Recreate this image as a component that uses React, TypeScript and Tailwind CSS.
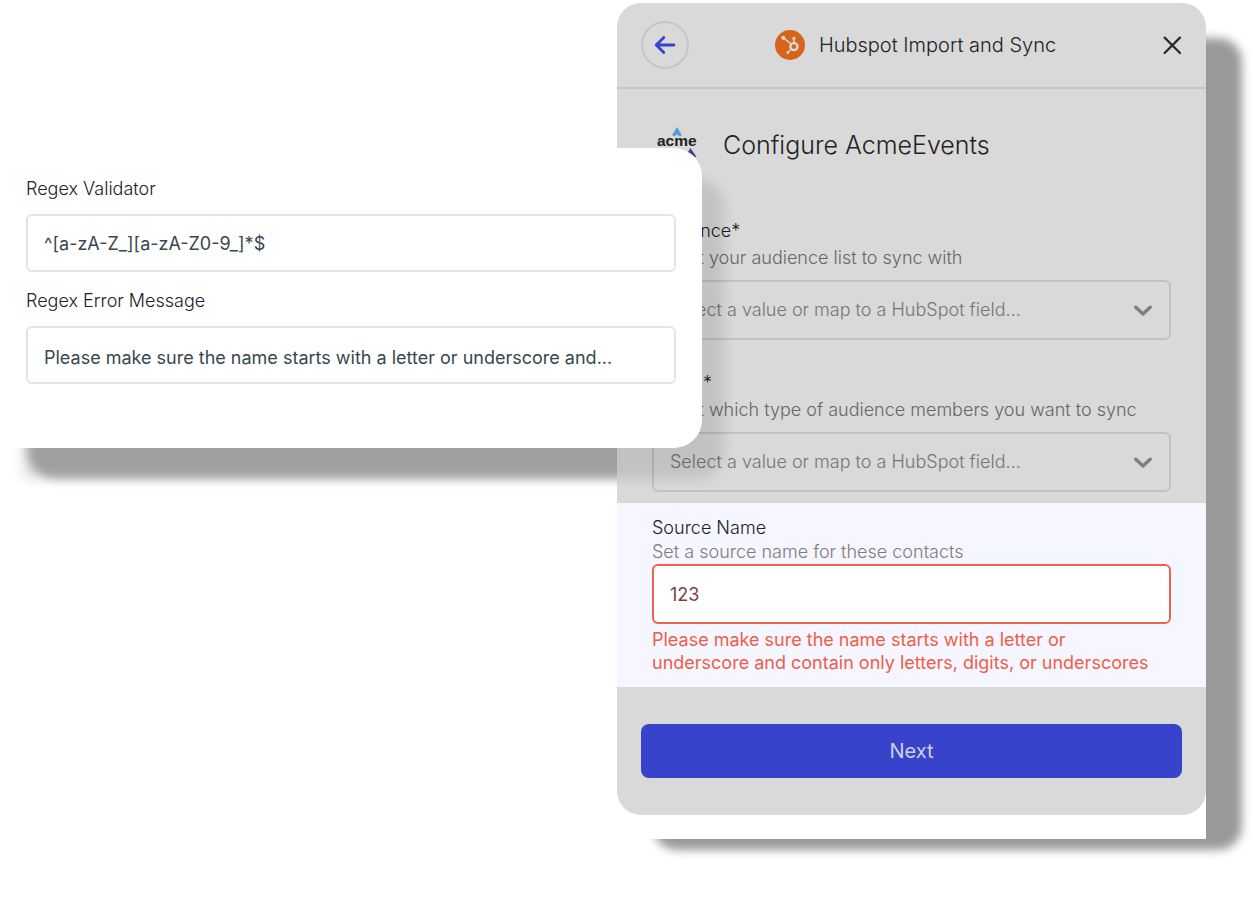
import { SiHubspot } from "react-icons/si";

function BackArrow() {
  return (
    <svg width="22" height="20" viewBox="0 0 22 20" fill="none" stroke="#3843cc" strokeWidth="2.8" strokeLinecap="round" strokeLinejoin="round" aria-hidden="true">
      <path d="M20 10H2.5M9.8 2.4L2.2 10l7.6 7.6" />
    </svg>
  );
}

function CloseIcon() {
  return (
    <svg width="20" height="20" viewBox="0 0 20 20" fill="none" stroke="#282828" strokeWidth="2.2" strokeLinecap="round" aria-hidden="true">
      <path d="M2.6 2.6l15.4 15.4M18 2.6L2.6 18" />
    </svg>
  );
}

function Chevron() {
  return (
    <svg className="pointer-events-none col-start-1 row-start-1 mr-[18px] self-center justify-self-end" width="20" height="12" viewBox="0 0 20 12" fill="none" stroke="#7f7f7f" strokeWidth="3.4" strokeLinecap="round" strokeLinejoin="round" aria-hidden="true">
      <path d="M2.8 3.2L10 10l7.2-6.8" />
    </svg>
  );
}

function AcmeLogo() {
  return (
    <svg width="42" height="36" viewBox="0 0 42 36" role="img" aria-label="acme">
      <path d="M20 0L24.8 8L22.8 9.6L20 7.4L17.2 9.6L15.2 8Z" fill="#5b9bd0" />
      <text x="0" y="19" fontFamily="Liberation Sans, sans-serif" fontWeight="700" fontSize="15.5" fill="#222222">acme</text>
      <path d="M33.5 21L39.5 30L36.5 30L33.5 27L30.5 30L28.5 29Z" fill="#4f3a86" />
      <path d="M7 22L10 27L7 32L4 27Z" fill="#4f3a86" />
    </svg>
  );
}

const selectFields = [
  { id: "audience", label: "Audience*", help: "Select your audience list to sync with" },
  { id: "types", label: "Types*", help: "Select which type of audience members you want to sync" },
];

export default function App() {
  return (
    <main className="min-h-screen overflow-hidden bg-white font-['Inter',sans-serif]">
      <div className="isolate grid grid-cols-[617fr_85fr_504fr] items-start pt-[3px] pr-[47px]">

        {/* Dark shadow of the settings card, stays behind the modal */}
        <div className="z-0 col-span-2 col-start-1 row-start-1 mt-[145px] h-[300px] rounded-[28px] shadow-[27px_31px_10px_rgba(0,0,0,0.3)]" aria-hidden="true"></div>

        {/* Import modal */}
        <section className="relative z-10 col-span-2 col-start-2 row-start-1 before:absolute before:inset-x-0 before:top-0 before:bottom-6 before:-z-10 before:rounded-3xl before:shadow-[36px_35px_10px_rgba(0,0,0,0.4)]">
          <div className="rounded-t-3xl bg-white pb-6">
            <header className="flex h-[86px] items-center justify-between rounded-t-3xl border-b-2 border-[#c6c6c6] bg-[#d9d9d9] px-6">
              <button type="button" aria-label="Back" className="flex size-12 items-center justify-center rounded-full border-2 border-[#c6c6c6]">
                <BackArrow />
              </button>
              <div className="flex items-center gap-3.5">
                <span className="flex size-[30px] items-center justify-center rounded-full bg-[#d6651b]">
                  <SiHubspot className="size-[18px] text-[#d9d9d9]" aria-hidden="true" />
                </span>
                <h1 className="text-xl font-light text-[#222222]">Hubspot Import and Sync</h1>
              </div>
              <button type="button" aria-label="Close" className="flex w-10 justify-end">
                <CloseIcon />
              </button>
            </header>

            <div className="bg-[#d9d9d9] px-[35px] pt-[38px] pb-[11px]">
              <div className="mb-14 flex items-center gap-6 pl-[5px]">
                <AcmeLogo />
                <h2 className="text-[25px] leading-[34px] font-light text-[#222222]">Configure AcmeEvents</h2>
              </div>

              <div className="flex flex-col gap-[31px]">
                {selectFields.map((field) => (
                  <div key={field.id}>
                    <label htmlFor={field.id} className="block text-lg leading-6 font-light text-[#1a1a1a]">{field.label}</label>
                    <p className="mt-[3px] mb-2.5 text-lg leading-6 font-light text-[#666666]">{field.help}</p>
                    <div className="grid">
                      <select id={field.id} className="col-start-1 row-start-1 h-[60px] w-full appearance-none rounded-md border-2 border-[#c2c2bc] bg-transparent px-4 text-lg font-light text-[#757575]">
                        <option>Select a value or map to a HubSpot field...</option>
                      </select>
                      <Chevron />
                    </div>
                  </div>
                ))}
              </div>
            </div>

            <div className="bg-[#f5f6ff] px-[35px] pt-[13px] pb-[13px]">
              <label htmlFor="source" className="block text-lg leading-6 font-light text-[#222222]">Source Name</label>
              <p className="text-lg leading-6 font-light text-[#7c7c7c]">Set a source name for these contacts</p>
              <input id="source" type="text" defaultValue="123" aria-invalid="true" aria-describedby="source-error" className="h-[60px] w-full rounded-md border-2 border-[#ee6350] bg-white px-4 text-lg text-[#7d3f3f]" />
              <p id="source-error" className="mt-1 pr-4 text-lg leading-[23px] text-[#f05d48]">
                Please make sure the name starts with a letter or underscore and contain only letters, digits, or underscores
              </p>
            </div>

            <footer className="rounded-b-3xl bg-[#d9d9d9] px-6 pt-[37px] pb-[37px]">
              <button type="button" className="h-[54px] w-full rounded-lg bg-[#3843cc] text-xl text-[#d0d0d8]">Next</button>
            </footer>
          </div>
        </section>

        {/* Validator settings card */}
        <section className="z-20 col-span-2 col-start-1 row-start-1 mt-[145px] h-[300px] rounded-r-[28px] bg-white px-[26px] pt-[29px] shadow-[22px_31px_12px_rgba(0,0,0,0.1)]">
          <label htmlFor="regex" className="block text-lg leading-6 font-light text-[#222222]">Regex Validator</label>
          <input id="regex" type="text" defaultValue="^[a-zA-Z_][a-zA-Z0-9_]*$" className="mt-[13px] mb-[17px] h-[58px] w-full rounded-md border-2 border-[#e4e4e0] px-4 text-lg text-[#37474f]" />
          <label htmlFor="regex-error" className="block text-lg leading-6 font-light text-[#222222]">Regex Error Message</label>
          <input id="regex-error" type="text" defaultValue="Please make sure the name starts with a letter or underscore and..." className="mt-[13px] h-[58px] w-full rounded-md border-2 border-[#e4e4e0] px-4 pt-1 text-lg text-[#37474f]" />
        </section>

      </div>
    </main>
  );
}
